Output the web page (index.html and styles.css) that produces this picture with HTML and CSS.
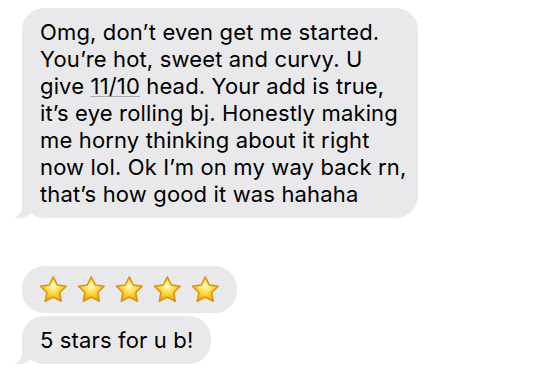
FILE: index.html
```html
<!DOCTYPE html>
<html lang="en">
<head>
    <meta charset="UTF-8">
    <title>Messages</title>
    <link rel="stylesheet" href="styles.css">
</head>
<body>
    <div class="thread">
        <div class="bubble tail wide">Omg, don’t even get me started.<br>You’re hot, sweet and curvy. U<br>give <span class="detected">11/10</span> head. Your add is true,<br>it’s eye rolling bj. Honestly making<br>me horny thinking about it right<br>now lol. Ok I’m on my way back rn,<br>that’s how good it was hahaha</div>

        <div class="group">
            <div class="bubble stars">
                <svg class="star" viewBox="0 0 32 32"><use href="#star"/></svg>
                <svg class="star" viewBox="0 0 32 32"><use href="#star"/></svg>
                <svg class="star" viewBox="0 0 32 32"><use href="#star"/></svg>
                <svg class="star" viewBox="0 0 32 32"><use href="#star"/></svg>
                <svg class="star" viewBox="0 0 32 32"><use href="#star"/></svg>
            </div>
            <div class="bubble tail">5 stars for u b!</div>
        </div>
    </div>

    <svg width="0" height="0" class="defs">
        <defs>
            <radialGradient id="gold" cx="50%" cy="38%" r="62%">
                <stop offset="0" stop-color="#fffbd0"/>
                <stop offset="0.4" stop-color="#ffdf50"/>
                <stop offset="0.8" stop-color="#f3b81c"/>
                <stop offset="1" stop-color="#e29a0a"/>
            </radialGradient>
            <symbol id="star" viewBox="0 0 32 32">
                <path d="M16 2.8 L20.2 11.3 L29.5 12.6 L22.7 19.1 L24.4 28.4 L16 24 L7.6 28.4 L9.3 19.1 L2.5 12.6 L11.8 11.3 Z" fill="url(#gold)" stroke="#d99210" stroke-width="1.6" stroke-linejoin="round"/>
            </symbol>
        </defs>
    </svg>
</body>
</html>
```

FILE: styles.css
```css
body {
    margin: 0;
    background: #fff;
    font-family: Inter, "Liberation Sans", sans-serif;
    color: #000;
}
.thread {
    padding: 8px 0 0 22px;
}
.bubble {
    position: relative;
    background: #e9e9eb;
    border-radius: 22px;
    font-size: 22px;
    letter-spacing: 0.15px;
    line-height: 27px;
    padding: 11px 18px 10px 18px;
    width: fit-content;
    box-sizing: border-box;
    white-space: nowrap;
}
.wide {
    width: 396px;
}
.detected {
    text-decoration: underline;
    text-decoration-color: #a8a8ac;
    text-decoration-thickness: 1px;
    text-underline-offset: 2px;
}
.group {
    margin-top: 48px;
    display: flex;
    flex-direction: column;
    gap: 3px;
}
.stars {
    display: flex;
    gap: 7.5px;
    padding: 8px 16px;
    height: 47px;
    width: 215px;
}
.star {
    width: 31px;
    height: 31px;
}
.tail::before {
    content: "";
    position: absolute;
    bottom: 0;
    left: -7px;
    width: 20px;
    height: 20px;
    background: #e9e9eb;
    border-bottom-right-radius: 16px 14px;
}
.tail::after {
    content: "";
    position: absolute;
    bottom: 0;
    left: -26px;
    width: 26px;
    height: 20px;
    background: #fff;
    border-bottom-right-radius: 10px;
}
.defs {
    position: absolute;
}
```
